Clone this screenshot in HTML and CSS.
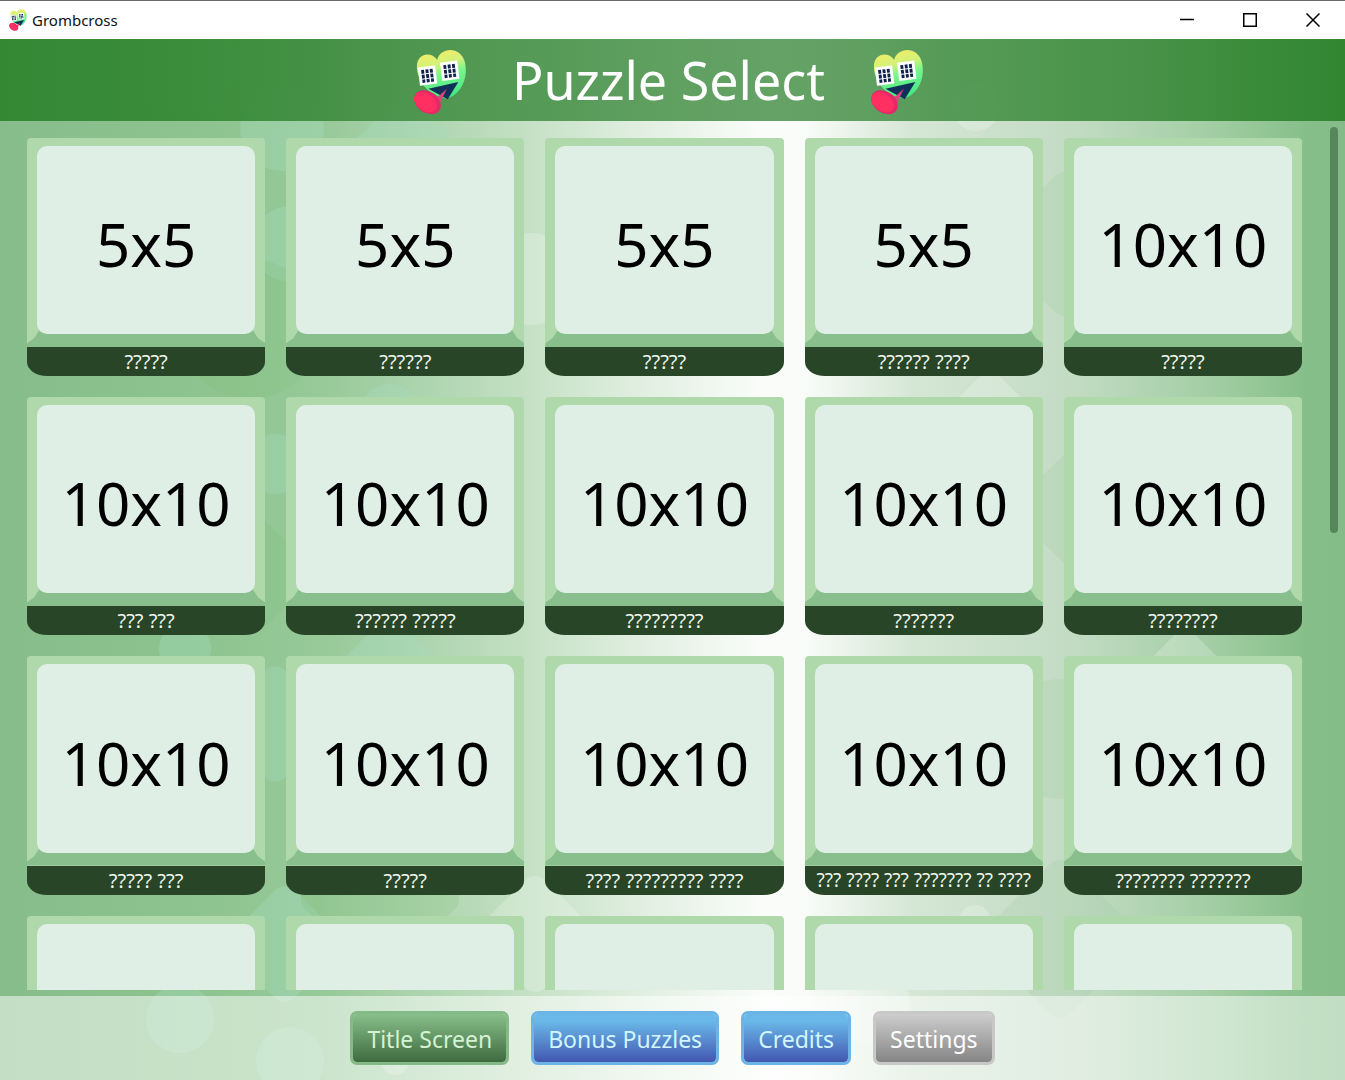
FILE: index.html
```
<!DOCTYPE html>
<html lang="en">
  <head>
    <meta charset="UTF-8" />
    <meta name="viewport" content="width=device-width, initial-scale=1.0" />
    <title>Grombcross</title>
    <link rel="stylesheet" href="styles.css">
  </head>
  <body>
    <svg class="sprites" aria-hidden="true">
      <defs>
        <linearGradient id="heart-fill" x1="0.35" y1="0" x2="0.6" y2="1">
          <stop offset="0.1" stop-color="#e9ee6c" />
          <stop offset="0.3" stop-color="#d2f279" />
          <stop offset="0.5" stop-color="#7df58b" />
          <stop offset="1" stop-color="#3fe886" />
        </linearGradient>
        <g id="eye">
          <rect width="18" height="19" fill="#fff" />
          <path d="M3 3h3v4h-3zM7.500 3h3v4h-3zM12 3h3v4h-3zM3 8h3v4h-3zM7.500 8h3v4h-3zM12 8h3v4h-3zM3 13h3v3.500h-3zM7.500 13h3v3.500h-3zM12 13h3v3.500h-3z" fill="#10204e" />
        </g>
        <symbol id="gromb" viewBox="0 0 56 68">
          <path d="M4 18C4 4 19 2 25 11C29 -3 50 -3 54 14C58 34 46 49 35 51C18 50 4 34 4 18Z" fill="url(#heart-fill)" />
          <use href="#eye" transform="translate(5 19) rotate(-7)" />
          <use href="#eye" transform="translate(28 14) rotate(-7)" />
          <path d="M16 41L47 34L36 52Z" fill="#10305a" />
          <path d="M22 53L35 41L28 56Z" fill="#d9467a" />
          <ellipse cx="15" cy="55" rx="15" ry="11" transform="rotate(35 15 55)" fill="#e5286a" />
          <ellipse cx="13" cy="55" rx="13" ry="9" transform="rotate(38 13 55)" fill="#ff2f62" />
        </symbol>
      </defs>
    </svg>

    <div class="titlebar">
      <svg class="titlebar-icon" aria-hidden="true"><use href="#gromb" /></svg>
      <span class="titlebar-name">Grombcross</span>
      <div class="window-controls">
        <button class="window-button" aria-label="Minimize">
          <svg viewBox="0 0 14 14"><path d="M0 6.500H14" /></svg>
        </button>
        <button class="window-button" aria-label="Maximize">
          <svg viewBox="0 0 14 14"><rect x="0.750" y="0.750" width="12.500" height="12.500" /></svg>
        </button>
        <button class="window-button" aria-label="Close">
          <svg viewBox="0 0 14 14"><path d="M0.500 0.500L13.500 13.500M13.500 0.500L0.500 13.500" /></svg>
        </button>
      </div>
    </div>

    <div class="game">
      <svg class="bokeh" viewBox="0 0 1345 1041" preserveAspectRatio="xMidYMid slice" aria-hidden="true">
        <g fill="#a5dcc0" fill-opacity="0.350">
          <circle cx="185" cy="25" r="52" />
          <circle cx="290" cy="205" r="38" />
          <circle cx="282" cy="90" r="42" />
          <circle cx="390" cy="375" r="30" />
          <circle cx="275" cy="425" r="30" />
          <circle cx="185" cy="610" r="26" />
          <rect x="230" y="640" width="90" height="90" rx="14" transform="rotate(45 275 685)" />
          <rect x="350" y="590" width="80" height="80" rx="14" transform="rotate(45 390 630)" />
          <rect x="360" y="70" width="90" height="90" rx="14" transform="rotate(45 405 115)" />
          <rect x="240" y="860" width="90" height="90" rx="14" transform="rotate(45 285 905)" />
          <circle cx="290" cy="1022" r="34" />
          <circle cx="180" cy="980" r="34" />
        </g>
        <g fill="#7fbd72" fill-opacity="0.200">
          <circle cx="250" cy="290" r="70" />
          <rect x="210" y="490" width="90" height="90" rx="14" transform="rotate(45 255 535)" />
          <rect x="320" y="800" width="120" height="120" rx="14" transform="rotate(45 380 860)" />
        </g>
        <g fill="#9ccaa0" fill-opacity="0.200">
          <rect x="1010" y="150" width="110" height="110" rx="14" transform="rotate(45 1065 205)" />
          <rect x="1030" y="420" width="100" height="100" rx="14" transform="rotate(45 1080 470)" />
          <circle cx="1060" cy="700" r="60" />
          <rect x="1000" y="840" width="120" height="120" rx="14" transform="rotate(45 1060 900)" />
        </g>
        <g fill="#fff" fill-opacity="0.220">
          <circle cx="975" cy="882" r="16" />
          <circle cx="976" cy="68" r="24" />
          <rect x="1150" y="600" width="70" height="70" rx="12" transform="rotate(45 1185 635)" />
          <rect x="960" y="340" width="60" height="60" rx="12" transform="rotate(45 990 370)" />
          <circle cx="530" cy="240" r="46" />
          <circle cx="395" cy="1022" r="14" />
          <circle cx="870" cy="965" r="40" />
          <rect x="490" y="850" width="90" height="90" rx="14" transform="rotate(45 535 895)" />
        </g>
      </svg>

      <header class="header">
        <svg class="mascot" aria-hidden="true"><use href="#gromb" /></svg>
        <h1 class="header-title">Puzzle Select</h1>
        <svg class="mascot" aria-hidden="true"><use href="#gromb" /></svg>
      </header>

      <main class="content">
        <div class="puzzle-list">
          <div class="puzzle-grid">
            <button class="puzzle"><span class="tile"><span class="tile-face">5x5</span></span><span class="label">?????</span></button>
            <button class="puzzle"><span class="tile"><span class="tile-face">5x5</span></span><span class="label">??????</span></button>
            <button class="puzzle"><span class="tile"><span class="tile-face">5x5</span></span><span class="label">?????</span></button>
            <button class="puzzle"><span class="tile"><span class="tile-face">5x5</span></span><span class="label">?????? ????</span></button>
            <button class="puzzle"><span class="tile"><span class="tile-face">10x10</span></span><span class="label">?????</span></button>

            <button class="puzzle"><span class="tile"><span class="tile-face">10x10</span></span><span class="label">??? ???</span></button>
            <button class="puzzle"><span class="tile"><span class="tile-face">10x10</span></span><span class="label">?????? ?????</span></button>
            <button class="puzzle"><span class="tile"><span class="tile-face">10x10</span></span><span class="label">?????????</span></button>
            <button class="puzzle"><span class="tile"><span class="tile-face">10x10</span></span><span class="label">???????</span></button>
            <button class="puzzle"><span class="tile"><span class="tile-face">10x10</span></span><span class="label">????????</span></button>

            <button class="puzzle"><span class="tile"><span class="tile-face">10x10</span></span><span class="label">????? ???</span></button>
            <button class="puzzle"><span class="tile"><span class="tile-face">10x10</span></span><span class="label">?????</span></button>
            <button class="puzzle"><span class="tile"><span class="tile-face">10x10</span></span><span class="label">???? ????????? ????</span></button>
            <button class="puzzle"><span class="tile"><span class="tile-face">10x10</span></span><span class="label label-long">??? ???? ??? ??????? ?? ????</span></button>
            <button class="puzzle"><span class="tile"><span class="tile-face">10x10</span></span><span class="label">???????? ???????</span></button>

            <button class="puzzle" aria-label="Locked puzzle"><span class="tile"><span class="tile-face"></span></span><span class="label"></span></button>
            <button class="puzzle" aria-label="Locked puzzle"><span class="tile"><span class="tile-face"></span></span><span class="label"></span></button>
            <button class="puzzle" aria-label="Locked puzzle"><span class="tile"><span class="tile-face"></span></span><span class="label"></span></button>
            <button class="puzzle" aria-label="Locked puzzle"><span class="tile"><span class="tile-face"></span></span><span class="label"></span></button>
            <button class="puzzle" aria-label="Locked puzzle"><span class="tile"><span class="tile-face"></span></span><span class="label"></span></button>
          </div>
        </div>
        <div class="scroll-track"><div class="scroll-thumb"></div></div>
      </main>

      <footer class="footer">
        <button class="button button-green">Title Screen</button>
        <button class="button button-blue">Bonus Puzzles</button>
        <button class="button button-blue">Credits</button>
        <button class="button button-gray">Settings</button>
      </footer>
    </div>
  </body>
</html>
```
FILE: styles.css
```
* {
  box-sizing: border-box;
}

body {
  margin: 0;
  height: 100vh;
  display: flex;
  flex-direction: column;
  overflow: hidden;
  font-family: "Noto Sans", "Open Sans", sans-serif;
}

button {
  font-family: inherit;
  cursor: pointer;
}

.sprites {
  position: absolute;
  width: 0;
  height: 0;
}

/* window title bar */
.titlebar {
  display: flex;
  align-items: center;
  height: 39px;
  flex-shrink: 0;
  padding: 0 1px 0 7px;
  background: #fff;
  border-top: 1px solid #6b6b6b;
}

.titlebar-icon {
  width: 22px;
  height: 22px;
  margin-right: 3px;
}

.titlebar-name {
  font-size: 15px;
  color: #111;
}

.window-controls {
  display: flex;
  align-self: stretch;
  margin-left: auto;
}

.window-button {
  display: flex;
  align-items: center;
  justify-content: center;
  width: 63px;
  padding: 0;
  border: none;
  background: none;
}

.window-button:hover {
  background: #e5e5e5;
}

.window-button svg {
  width: 14px;
  height: 14px;
  fill: none;
  stroke: #000;
  stroke-width: 1.5;
}

/* game area */
.game {
  position: relative;
  z-index: 0;
  flex: 1;
  min-height: 0;
  display: flex;
  flex-direction: column;
  background: linear-gradient(
    90deg,
    #87bd8b 0%,
    #8dc38e 14%,
    #97c999 24%,
    #c4e0c4 39%,
    #dcecdc 46%,
    #fbfdfb 57%,
    #f8fbf8 60%,
    #d5e6d5 68%,
    #c2dbc3 80%,
    #a3cea5 90%,
    #87bf8a 97%,
    #84bb88 100%
  );
}

.bokeh {
  position: absolute;
  inset: 0;
  z-index: -1;
  width: 100%;
  height: 100%;
}

.header {
  display: flex;
  align-items: center;
  justify-content: center;
  gap: 45px;
  height: 82px;
  flex-shrink: 0;
  padding-right: 8px;
  background: linear-gradient(90deg, #348834 0%, #378a37f2 15%, #3e8b3fd9 30%, #3e8b3fcc 50%, #3e8b3fcc 65%, #3c8b3ce6 85%, #328632 100%);
}

.header-title {
  margin: 0;
  font-size: 52px;
  font-weight: 400;
  line-height: 80px;
  color: #fff;
}

.mascot {
  width: 54px;
  height: 66px;
  margin-top: 4px;
}

.content {
  flex: 1;
  min-height: 0;
  display: flex;
  padding: 6px 7px 6px 27px;
}

.puzzle-list {
  flex: 1;
  overflow: hidden;
}

.puzzle-grid {
  display: grid;
  grid-template-columns: repeat(5, 1fr);
  gap: 21px;
  padding-top: 11px;
}

.puzzle {
  display: flex;
  flex-direction: column;
  min-width: 0;
  aspect-ratio: 1;
  padding: 0;
  border: none;
  border-radius: 4px 4px 20px 20px / 4px 4px 14px 14px;
  background: none;
  overflow: hidden;
}

.tile {
  position: relative;
  flex: 1;
  align-self: stretch;
  display: flex;
  padding: 8px 10px 13px;
  background: #b0d9ab;
}

/* darker lower bevel */
.tile::before {
  content: "";
  position: absolute;
  left: 0;
  right: 0;
  bottom: 0;
  height: 18px;
  background: #88bf8c;
  clip-path: polygon(0 14px, 7px 9px, 13px 0, calc(100% - 13px) 0, calc(100% - 7px) 9px, 100% 14px, 100% 100%, 0 100%);
}

.tile-face {
  position: relative;
  flex: 1;
  display: flex;
  align-items: center;
  justify-content: center;
  padding-top: 8px;
  border-radius: 10px;
  background: #e0efe5;
  font-size: 60px;
  line-height: 80px;
  color: #000;
}

.label {
  align-self: stretch;
  height: 29px;
  font-size: 20px;
  line-height: 29px;
  white-space: nowrap;
  text-align: center;
  color: #f0f7ee;
  background: #284527;
}

.label-long {
  font-size: 19px;
}

.scroll-track {
  width: 8px;
  margin-left: 28px;
}

.scroll-thumb {
  height: 47%;
  border-radius: 4px;
  background: #55875a;
}

.footer {
  display: flex;
  align-items: center;
  justify-content: center;
  gap: 22px;
  height: 84px;
  flex-shrink: 0;
  background: rgba(255, 255, 255, 0.5);
}

.button {
  height: 54px;
  padding: 2px 14px 0;
  border: 3px solid;
  border-radius: 7px;
  font-size: 23px;
  line-height: 46px;
}

.button:hover {
  filter: brightness(1.05);
}

.button-green {
  color: #d5f2d3;
  border-color: #84b988;
  background: linear-gradient(#88bf8a, #3f6b40) padding-box;
}

.button-blue {
  color: #d0f6ff;
  border-color: #6cb4e6;
  background: linear-gradient(#6ab8e8 15%, #4257b0) padding-box;
}

.button-gray {
  color: #fff;
  border-color: #c8c8c8;
  background: linear-gradient(#cdcdcd, #858585) padding-box;
}
```
